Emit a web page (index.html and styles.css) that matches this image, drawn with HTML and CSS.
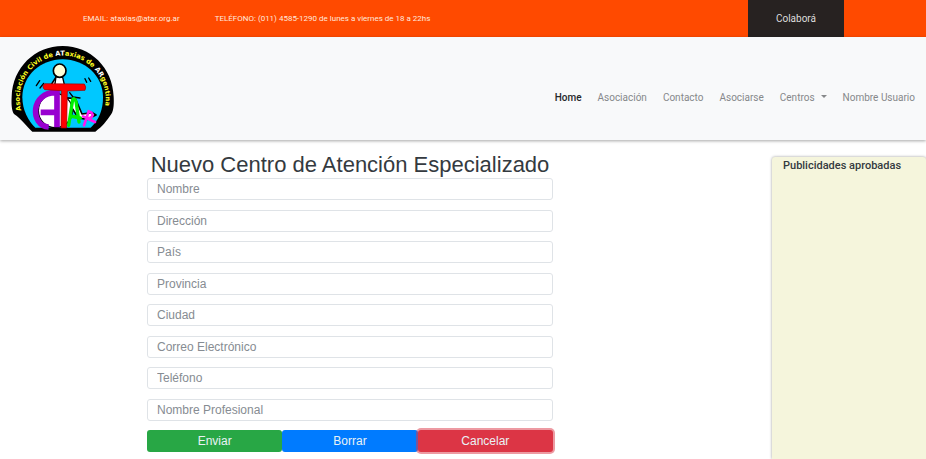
FILE: index.html
```html
<!DOCTYPE html>
<html lang="es">
<head>
<meta charset="utf-8">
<meta name="viewport" content="width=device-width, initial-scale=1">
<title>Nuevo Centro de Atención Especializado</title>
<link rel="stylesheet" href="styles.css">
</head>
<body>
<div class="topbar">
  <div class="topbar-info">
    <span>EMAIL: ataxias@atar.org.ar</span>
    <span>TELÉFONO: (011) 4585-1290 de lunes a viernes de 18 a 22hs</span>
  </div>
  <a class="donate" href="#">Colaborá</a>
</div>
<header class="navbar">
  <a class="brand" href="#" aria-label="ATAR">
    <svg class="logo" viewBox="33 33 309 261" aria-hidden="true">
      <path d="M97 293C78 276 66 256 42 240C34 228 34 205 35 188C38 100 105 36 188 36C271 36 338 100 341 188C342 205 342 228 334 240C318 264 308 276 286 293Z" fill="#000"/>
      <path d="M106 281C84 262 67 226 67 190C67 125 122 76 188 76C254 76 309 125 309 190C309 226 298 258 272 281Z" fill="#00c8ff"/>
      <path id="ring" d="M64 229A129 129 0 1 1 312 229" fill="none"/>
      <text class="logo-text"><textPath href="#ring">Asociación Civil de <tspan class="logo-light">AT</tspan>axias de <tspan class="logo-light">AR</tspan>gentina</textPath></text>
      <g stroke="#000" stroke-linejoin="round" stroke-linecap="round">
        <path d="M169 128L166 158L182 190L226 194L246 240L277 236L288 243L262 256L235 252L212 216L180 218L150 158Z" fill="#fff" stroke-width="5"/>
        <path d="M168 128L188 130L194 156L164 156Z" fill="#fff" stroke-width="4"/>
        <ellipse cx="179" cy="110" rx="19" ry="20" fill="#ffffd8" stroke-width="5"/>
        <path d="M109 155L119 140M120 162L131 148M255 134L260 145M266 132L272 142M209 176L219 189L240 192" fill="none" stroke-width="4"/>
        <circle cx="166" cy="230" r="51" fill="#fff" stroke-width="4"/>
      </g>
      <path d="M171 280V176C90 172 90 276 146 279M122 235H174" fill="none" stroke="#9800d0" stroke-width="17"/>
      <path d="M134 149L253 150Q260 159 255 169L202 171L200 282H183L184 170L134 167Q124 158 134 149Z" fill="#f00" stroke="#900" stroke-width="2"/>
      <path d="M206 274L218 197Q223 190 228 202L237 264M211 246L241 252" fill="none" stroke="#00f000" stroke-width="10" stroke-linecap="round"/>
      <path d="M252 274L266 232Q282 237 276 248Q269 257 249 247M259 252L285 264" fill="none" stroke="#ff18f0" stroke-width="8" stroke-linecap="round"/>
    </svg>
  </a>
  <nav class="nav-links" aria-label="Principal">
    <a class="active" href="#">Home</a>
    <a href="#">Asociación</a>
    <a href="#">Contacto</a>
    <a href="#">Asociarse</a>
    <a class="dropdown" href="#">Centros</a>
    <a href="#">Nombre Usuario</a>
  </nav>
</header>
<div class="content">
  <main class="main">
    <h1>Nuevo Centro de Atención Especializado</h1>
    <form class="form">
      <input type="text" placeholder="Nombre" aria-label="Nombre">
      <input type="text" placeholder="Dirección" aria-label="Dirección">
      <input type="text" placeholder="País" aria-label="País">
      <input type="text" placeholder="Provincia" aria-label="Provincia">
      <input type="text" placeholder="Ciudad" aria-label="Ciudad">
      <input type="email" placeholder="Correo Electrónico" aria-label="Correo Electrónico">
      <input type="tel" placeholder="Teléfono" aria-label="Teléfono">
      <input type="text" placeholder="Nombre Profesional" aria-label="Nombre Profesional">
      <div class="actions">
        <button class="send" type="submit">Enviar</button>
        <button class="clear" type="reset">Borrar</button>
        <button class="cancel" type="button">Cancelar</button>
      </div>
    </form>
  </main>
  <aside class="ads">
    <h2>Publicidades aprobadas</h2>
  </aside>
</div>
</body>
</html>
```
FILE: styles.css
```css
* {
  box-sizing: border-box;
}

body {
  margin: 0;
  min-height: 100vh;
  display: flex;
  flex-direction: column;
  background: #fff;
  color: #343a40;
  font-family: Roboto, sans-serif;
}

a {
  color: inherit;
  text-decoration: none;
}

.topbar {
  display: flex;
  justify-content: space-between;
  padding: 0 82px 0 83px;
  background: #ff4a00;
  color: #ffe9df;
  font-size: 8px;
  line-height: 37px;
}

.topbar-info {
  display: flex;
  gap: 35px;
}

.donate {
  padding: 0 28px;
  background: #272221;
  color: #ddd;
  font-size: 10px;
}

.navbar {
  display: flex;
  align-items: center;
  justify-content: space-between;
  padding: 8px 11px;
  background: #f8f9fa;
  box-shadow: 0 1px 3px rgba(0, 0, 0, 0.35);
}

.brand,
.logo {
  display: block;
}

.logo {
  width: 103px;
  height: 87px;
}

.logo-text {
  fill: #ffff20;
  font: bold 20px "DejaVu Sans", sans-serif;
}

.logo-light {
  fill: #fff;
}

.nav-links {
  display: flex;
  gap: 16px;
  padding-top: 18px;
  color: #86888a;
  font-size: 10px;
  line-height: 16px;
}

.nav-links .active {
  color: #25272a;
  font-weight: 500;
}

.dropdown::after {
  content: "";
  display: inline-block;
  margin-left: 6px;
  vertical-align: 3px;
  border: 3px solid transparent;
  border-top-color: currentColor;
  border-bottom: 0;
}

.content {
  flex: 1;
  display: flex;
  justify-content: space-between;
  padding-top: 12px;
}

.main {
  display: flex;
  flex-direction: column;
  width: 406px;
  max-width: 60%;
  margin-left: 147px;
  padding-bottom: 7px;
  font-family: "Liberation Sans", sans-serif;
}

h1 {
  margin: 0;
  font-size: 22px;
  font-weight: 400;
  line-height: 26px;
  text-align: center;
  white-space: nowrap;
}

.form {
  flex: 1;
  display: flex;
  flex-direction: column;
  justify-content: space-between;
}

input {
  width: 100%;
  height: 22px;
  padding: 0 9px;
  border: 1px solid #dfe3e7;
  border-radius: 3px;
  background: #fff;
  color: #495057;
  font: 12px "Liberation Sans", sans-serif;
}

input::placeholder {
  color: #868c92;
  opacity: 1;
}

.actions {
  display: grid;
  grid-template-columns: repeat(3, 1fr);
}

button {
  height: 22px;
  padding: 0;
  border: 0;
  border-radius: 3px;
  color: #e9f2f5;
  font: 12px "Liberation Sans", sans-serif;
}

.send {
  background: #28a745;
}

.clear {
  background: #007bff;
}

.cancel {
  background: #dc3545;
  box-shadow: 0 0 0 2px rgba(220, 53, 69, 0.5);
}

.ads {
  width: 154px;
  margin-top: 5px;
  padding: 0 11px;
  border-radius: 3px 3px 0 0;
  background: #f5f5dc;
  box-shadow: 0 0 3px rgba(0, 0, 0, 0.4);
}

h2 {
  margin: 0;
  font-size: 11px;
  font-weight: 500;
  line-height: 18px;
  white-space: nowrap;
}
```
